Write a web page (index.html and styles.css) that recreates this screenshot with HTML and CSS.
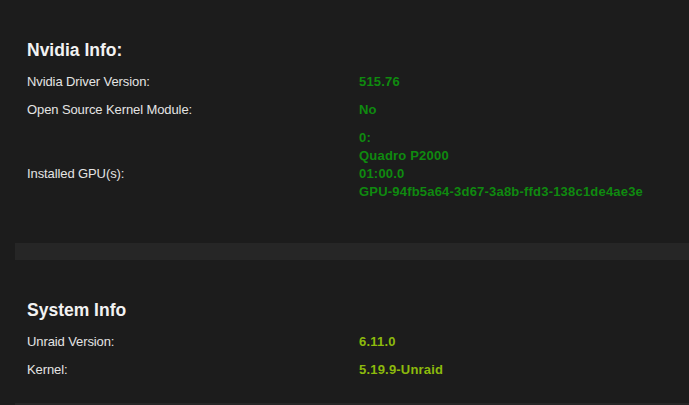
FILE: index.html
```html
<!DOCTYPE html>
<html lang="en">

<head>
    <meta charset="UTF-8">
    <meta name="viewport" content="width=device-width, initial-scale=1.0">
    <title>Nvidia Driver</title>
    <link rel="stylesheet" href="styles.css">
</head>

<body>
    <div class="page">
        <!-- Nvidia 信息 -->
        <div class="section">
            <h2 class="title">Nvidia Info:</h2>
            <div class="info">
                <div class="label">Nvidia Driver Version:</div>
                <div class="value green">515.76</div>

                <div class="label">Open Source Kernel Module:</div>
                <div class="value green">No</div>

                <div class="label">Installed GPU(s):</div>
                <div class="value green">0:<br>Quadro P2000<br>01:00.0<br>GPU-94fb5a64-3d67-3a8b-ffd3-138c1de4ae3e<br><br></div>
            </div>
        </div>

        <div class="divider"></div>

        <!-- 系统信息 -->
        <div class="section">
            <h2 class="title">System Info</h2>
            <div class="info">
                <div class="label">Unraid Version:</div>
                <div class="value lime">6.11.0</div>

                <div class="label">Kernel:</div>
                <div class="value lime">5.19.9-Unraid</div>
            </div>
        </div>

        <div class="divider"></div>
    </div>
</body>

</html>
```

FILE: styles.css
```css
* {
    margin: 0;
    padding: 0;
}

body {
    background-color: #1c1c1c;
    font-family: "Liberation Sans", Arial, sans-serif;
    color: #e4e4e4;
    overflow: hidden;
}

.page {
    padding-left: 15px;
}

.section {
    padding: 38px 0 19px;
}

.title {
    font-size: 17.5px;
    line-height: 24px;
    font-weight: bold;
    color: #f2f2f2;
    padding-left: 12px;
    margin-bottom: 6px;
}

.info {
    display: grid;
    grid-template-columns: 332px 1fr;
    align-items: center;
}

.label,
.value {
    font-size: 13px;
    line-height: 18px;
    padding: 5px 12px;
}

.label {
    letter-spacing: -0.1px;
}

.value {
    font-weight: bold;
    letter-spacing: 0.2px;
    white-space: nowrap;
}

.green {
    color: #0f8a0f;
}

.lime {
    color: #8cba0c;
}

.divider {
    height: 17px;
    background-color: #262626;
}
```
